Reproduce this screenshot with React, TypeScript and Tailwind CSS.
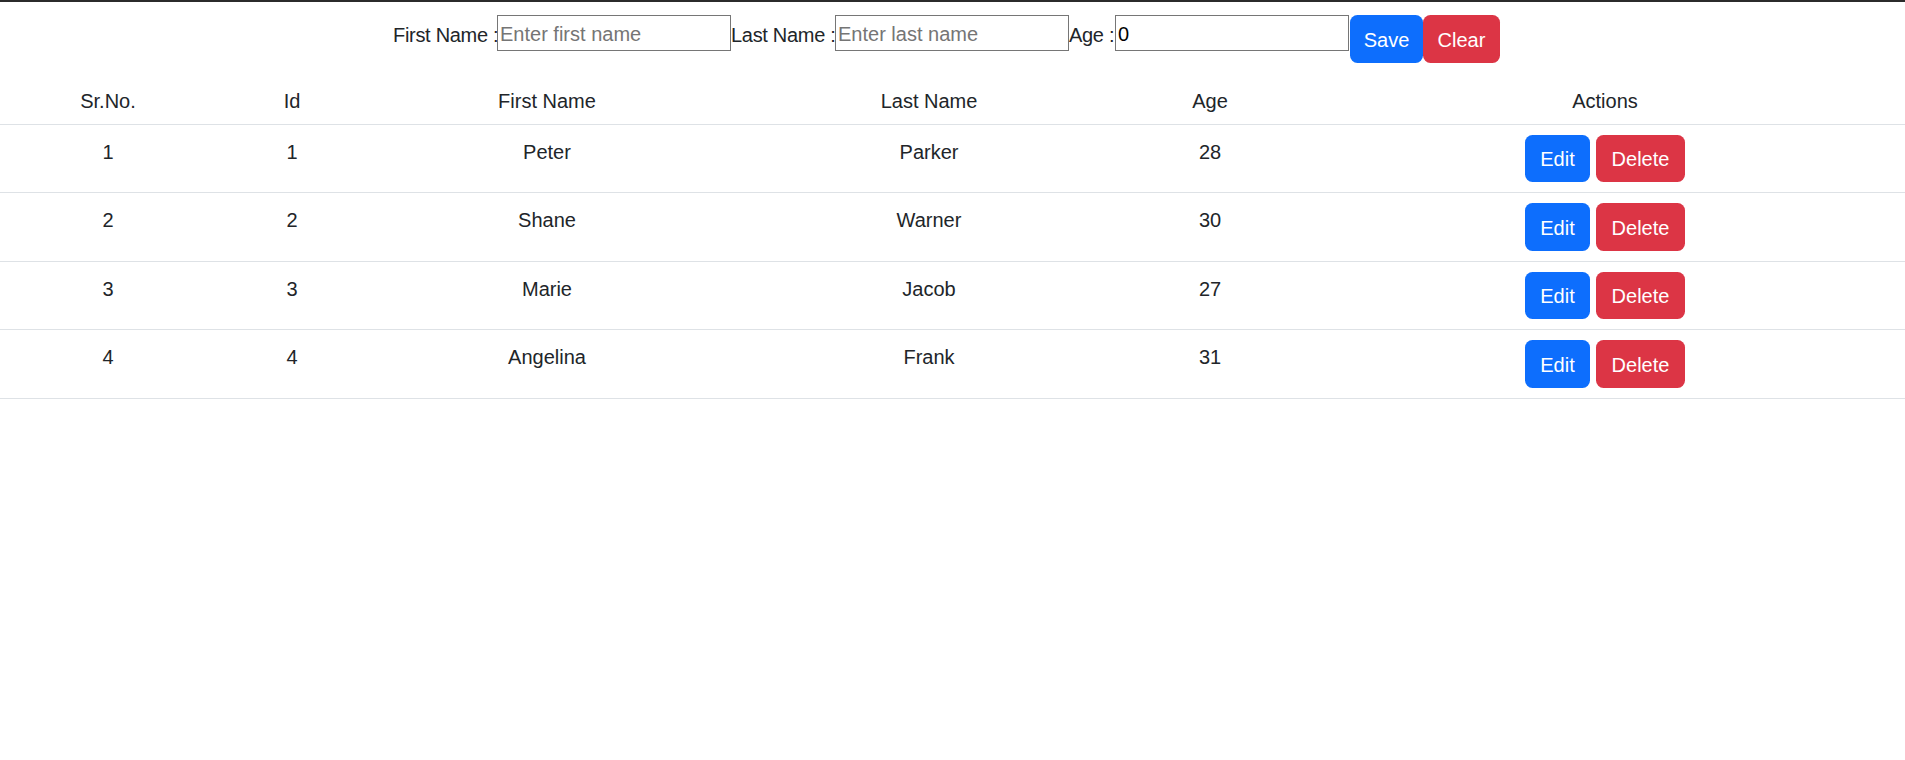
import { useState } from 'react';

type Person = { id: number; firstName: string; lastName: string; age: number };

const PEOPLE: Person[] = [
    { id: 1, firstName: 'Peter', lastName: 'Parker', age: 28 },
    { id: 2, firstName: 'Shane', lastName: 'Warner', age: 30 },
    { id: 3, firstName: 'Marie', lastName: 'Jacob', age: 27 },
    { id: 4, firstName: 'Angelina', lastName: 'Frank', age: 31 },
];

const HEADERS = ['Sr.No.', 'Id', 'First Name', 'Last Name', 'Age', 'Actions'];

export default function App() {
    const [firstName, setFirstName] = useState('');
    const [lastName, setLastName] = useState('');
    const [age, setAge] = useState(0);

    const inputClass =
        'h-[36px] w-[234px] border border-[#767676] bg-white px-[2px] pt-[2px] text-[20px] text-black placeholder:text-[#757575] outline-none';
    const labelClass = 'flex h-[36px] items-center whitespace-nowrap pt-[3px] tracking-[-0.3px]';
    const cellClass = 'px-[10px] pt-[12px] pb-[8px] text-center align-top';

    return (
        <div className="min-h-screen bg-white text-[20px] leading-[30px] text-[#212529] font-['Liberation_Sans',Arial,sans-serif]">
            {/* window top edge */}
            <div className="h-[2px] bg-[#2b2b2b]" />

            <div className="flex items-start justify-center pt-[13px] pb-[11px] pr-[12px]">
                <label className={`${labelClass} w-[104px]`}>First Name :</label>
                <input
                    className={inputClass}
                    placeholder="Enter first name"
                    value={firstName}
                    onChange={(e) => setFirstName(e.target.value)}
                />
                <label className={`${labelClass} w-[104px]`}>Last Name :</label>
                <input
                    className={inputClass}
                    placeholder="Enter last name"
                    value={lastName}
                    onChange={(e) => setLastName(e.target.value)}
                />
                <label className={`${labelClass} w-[46px]`}>Age :</label>
                <input
                    className={inputClass}
                    value={age}
                    onChange={(e) => setAge(Number(e.target.value) || 0)}
                />
                <button className="ml-[1px] h-[47.5px] w-[73px] rounded-[7.5px] bg-[#0d6efd] pt-[2px] text-white">Save</button>
                <button className="h-[47.5px] w-[77px] rounded-[7.5px] bg-[#dc3545] pt-[2px] text-white">Clear</button>
            </div>

            <table className="w-full table-fixed border-collapse">
                <colgroup>
                    <col className="w-[216px]" />
                    <col className="w-[152px]" />
                    <col className="w-[358px]" />
                    <col className="w-[406px]" />
                    <col className="w-[156px]" />
                    <col />
                </colgroup>
                <thead>
                    <tr className="border-b border-[#dee2e6]">
                        {HEADERS.map((h, i) => (
                            <th
                                key={h}
                                className={
                                    i === 5
                                        ? 'pl-[27px] pr-[10px] pt-[12px] pb-[8px] text-center align-top font-normal'
                                        : `${cellClass} font-normal`
                                }
                            >
                                {h}
                            </th>
                        ))}
                    </tr>
                </thead>
                <tbody>
                    {PEOPLE.map((p, index) => (
                        <tr key={p.id} className="border-b border-[#dee2e6]">
                            <td className={cellClass}>{index + 1}</td>
                            <td className={cellClass}>{p.id}</td>
                            <td className={cellClass}>{p.firstName}</td>
                            <td className={cellClass}>{p.lastName}</td>
                            <td className={cellClass}>{p.age}</td>
                            <td className="py-[10px] pl-[27px] pr-[10px] align-top">
                                <div className="flex justify-center gap-[6px]">
                                    <button className="h-[47.5px] w-[65px] rounded-[7.5px] bg-[#0d6efd] pt-[2px] text-white">Edit</button>
                                    <button className="h-[47.5px] w-[89px] rounded-[7.5px] bg-[#dc3545] pt-[2px] text-white">Delete</button>
                                </div>
                            </td>
                        </tr>
                    ))}
                </tbody>
            </table>
        </div>
    );
}
